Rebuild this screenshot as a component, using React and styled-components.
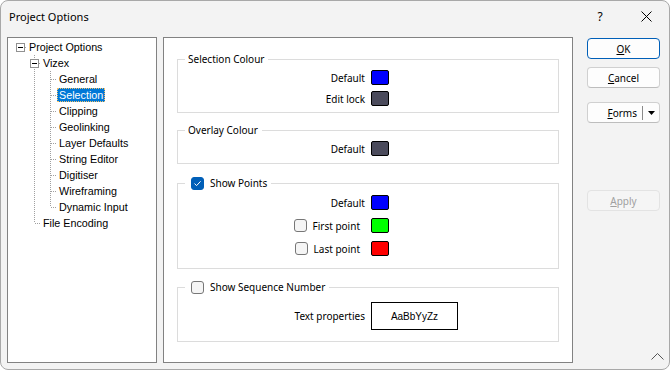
import styled, { createGlobalStyle } from 'styled-components';

const GlobalStyle = createGlobalStyle`
  html, body {
    margin: 0;
    padding: 0;
    background: #ffffff;
  }
  body {
    font-family: "Noto Sans", "Liberation Sans", sans-serif;
  }
`;

const Window = styled.div`
  position: relative;
  width: 670px;
  height: 370px;
  box-sizing: border-box;
  border: 1px solid #a8a8a8;
  border-radius: 8px;
  background: #f3f3f3;
  overflow: hidden;
  display: flex;
  flex-direction: column;
  color: #000;
  font-family: "Noto Sans", "Liberation Sans", sans-serif;
`;

const TitleBar = styled.div`
  height: 30px;
  flex: none;
  display: flex;
  align-items: center;
  padding-left: 8px;
  font-size: 11px;
`;

const Title = styled.div`
  flex: 1;
`;

const CaptionButton = styled.div`
  width: 46px;
  height: 30px;
  display: flex;
  align-items: center;
  justify-content: center;
  font-size: 12px;
`;

const Body = styled.div`
  flex: 1;
  display: flex;
  padding: 6px 9px 6px 6px;
  min-height: 0;
`;

const Tree = styled.div`
  width: 150px;
  flex: none;
  box-sizing: border-box;
  border: 1px solid #828282;
  background: #fff;
  padding-top: 1px;
  font-family: "Liberation Sans", Arial, sans-serif;
  font-size: 10.75px;
`;

const TreeRow = styled.div`
  display: flex;
  height: 16px;
  padding-left: ${p => p.$indent}px;
`;

const dotsV = 'repeating-linear-gradient(to bottom, #a0a0a0 0 1px, transparent 1px 2px)';
const dotsH = 'repeating-linear-gradient(to right, #a0a0a0 0 1px, transparent 1px 2px)';

const Guide = styled.div`
  position: relative;
  flex: none;
  width: ${p => p.$w}px;
  height: 16px;
  &::before {
    content: '';
    display: ${p => (p.$v ? 'block' : 'none')};
    position: absolute;
    left: ${p => p.$at}px;
    top: 0;
    width: 1px;
    height: ${p => (p.$v === 'top' ? '8px' : '16px')};
    background: ${dotsV};
  }
  &::after {
    content: '';
    display: ${p => (p.$h ? 'block' : 'none')};
    position: absolute;
    left: ${p => p.$at + 1}px;
    right: 0;
    top: 8px;
    height: 1px;
    background: ${dotsH};
  }
`;

const Expander = styled.span`
  position: absolute;
  z-index: 1;
  left: ${p => p.$at - 4}px;
  top: 4px;
  width: 9px;
  height: 9px;
  box-sizing: border-box;
  border: 1px solid #919191;
  background: #fff;
  &::after {
    content: '';
    position: absolute;
    left: 1px;
    top: 3px;
    width: 5px;
    height: 1px;
    background: #000;
  }
`;

const NodeLabel = styled.span`
  height: 14px;
  line-height: 14px;
  margin-top: 1px;
  padding: 0 2px;
  white-space: nowrap;
  background: ${p => (p.$selected ? '#0078d7' : 'transparent')};
  color: ${p => (p.$selected ? '#fff' : '#000')};
  outline: ${p => (p.$selected ? '1px dotted #f5c26b' : 'none')};
  outline-offset: -1px;
`;

const Panel = styled.div`
  width: 410px;
  flex: none;
  margin-left: 6px;
  box-sizing: border-box;
  border: 1px solid #828282;
  background: #fff;
  padding: 14px 13px 0;
  display: flex;
  flex-direction: column;
  font-size: 10px;
`;

const Group = styled.fieldset`
  margin: ${p => p.$mt || 0}px 0 0;
  padding: ${p => p.$pt}px 0 ${p => p.$pb}px;
  border: 1px solid #dcdcdc;
  min-width: 0;
  display: flex;
  flex-direction: column;
  gap: ${p => p.$gap || 6}px;
`;

const Legend = styled.legend`
  margin-left: 7px;
  padding: 0 4px 0 ${p => (p.$check ? 6 : 3)}px;
  height: 14px;
  line-height: 14px;
`;

const LegendInner = styled.span`
  display: flex;
  align-items: center;
  gap: 6px;
  height: 14px;
`;

const FieldRow = styled.div`
  display: grid;
  grid-template-columns: 187px ${p => p.$w || 18}px;
  column-gap: 6px;
  align-items: center;
  height: ${p => p.$h || 15}px;
`;

const FieldLabel = styled.span`
  justify-self: end;
  display: flex;
  align-items: center;
  gap: 6px;
  padding-right: ${p => (p.$check ? 5 : 0)}px;
  line-height: 14px;
`;

const Swatch = styled.span`
  display: block;
  width: 18px;
  height: 15px;
  box-sizing: border-box;
  border: 1px solid #000;
  border-radius: 2px;
  background: ${p => p.$color};
`;

const FontPreview = styled.div`
  height: 28px;
  box-sizing: border-box;
  border: 1px solid #000;
  display: flex;
  align-items: center;
  justify-content: center;
  font-family: "Liberation Sans", Arial, sans-serif;
  font-size: 10px;
`;

const Box = styled.span`
  width: 13px;
  height: 13px;
  flex: none;
  box-sizing: border-box;
  border-radius: 3px;
  border: 1px solid ${p => (p.$checked ? '#005fb8' : '#777')};
  background: ${p => (p.$checked ? '#005fb8' : '#f5f5f5')};
  display: flex;
  align-items: center;
  justify-content: center;
`;

const Buttons = styled.div`
  width: 73px;
  flex: none;
  margin-left: 14px;
  display: flex;
  flex-direction: column;
`;

const Button = styled.div`
  height: 21px;
  margin-top: ${p => p.$mt}px;
  box-sizing: border-box;
  border: 1px solid ${p => (p.$default ? '#005fb8' : p.$disabled ? '#e3e3e3' : '#d0d0d0')};
  border-bottom-color: ${p => (p.$default ? '#005fb8' : p.$disabled ? '#e3e3e3' : '#bdbdbd')};
  border-radius: 4px;
  background: ${p => (p.$disabled ? '#f5f5f5' : '#fdfdfd')};
  color: ${p => (p.$disabled ? '#a0a0a0' : '#000')};
  display: flex;
  align-items: center;
  justify-content: center;
  font-size: 10px;
`;

const SplitText = styled.span`
  flex: 1;
  text-align: right;
  padding-right: 5px;
`;

const SplitDivider = styled.span`
  width: 1px;
  height: 14px;
  background: #8a8a8a;
`;

const SplitArrow = styled.span`
  width: 16px;
  display: flex;
  justify-content: center;
`;

const Grip = styled.svg`
  position: absolute;
  right: 5px;
  bottom: 9px;
`;

const Check = () => (
  <svg width="9" height="9" viewBox="0 0 9 9">
    <path d="M1.5 4.6 L3.6 6.6 L7.6 2.3" fill="none" stroke="#fff" strokeWidth="1" />
  </svg>
);

const CheckBox = ({ checked }) => <Box $checked={checked}>{checked && <Check />}</Box>;

const u = ch => <span style={{ textDecoration: 'underline' }}>{ch}</span>;

const children = ['General', 'Selection', 'Clipping', 'Geolinking', 'Layer Defaults', 'String Editor', 'Digitiser', 'Wireframing', 'Dynamic Input'];

export default function App() {
  return (
    <>
      <GlobalStyle />
      <Window>
        <TitleBar>
          <Title>Project Options</Title>
          <CaptionButton>?</CaptionButton>
          <CaptionButton>
            <svg width="11" height="11" viewBox="0 0 11 11">
              <path d="M0.5 0.5 L10.5 10.5 M10.5 0.5 L0.5 10.5" stroke="#000" strokeWidth="1" />
            </svg>
          </CaptionButton>
        </TitleBar>
        <Body>
          <Tree>
            <TreeRow $indent={4}>
              <Guide $w={15} $at={8} $h>
                <Expander $at={8} />
              </Guide>
              <NodeLabel>Project Options</NodeLabel>
            </TreeRow>
            <TreeRow $indent={18}>
              <Guide $w={15} $at={8} $v="full" $h>
                <Expander $at={8} />
              </Guide>
              <NodeLabel>Vizex</NodeLabel>
            </TreeRow>
            {children.map((name, i) => (
              <TreeRow key={name} $indent={18}>
                <Guide $w={15} $at={8} $v="full" />
                <Guide $w={16} $at={9} $v={i === children.length - 1 ? 'top' : 'full'} $h />
                <NodeLabel $selected={name === 'Selection'}>{name}</NodeLabel>
              </TreeRow>
            ))}
            <TreeRow $indent={18}>
              <Guide $w={15} $at={8} $v="top" $h />
              <NodeLabel>File Encoding</NodeLabel>
            </TreeRow>
          </Tree>

          <Panel>
            <Group $pt={4} $pb={6}>
              <Legend>Selection Colour</Legend>
              <FieldRow>
                <FieldLabel>Default</FieldLabel>
                <Swatch $color="#0000ff" />
              </FieldRow>
              <FieldRow>
                <FieldLabel>Edit lock</FieldLabel>
                <Swatch $color="#4b4b5c" />
              </FieldRow>
            </Group>

            <Group $mt={10} $pt={4} $pb={7}>
              <Legend>Overlay Colour</Legend>
              <FieldRow>
                <FieldLabel>Default</FieldLabel>
                <Swatch $color="#4b4b5c" />
              </FieldRow>
            </Group>

            <Group $mt={12} $pt={5} $pb={12} $gap={8}>
              <Legend $check>
                <LegendInner>
                  <CheckBox checked />
                  Show Points
                </LegendInner>
              </Legend>
              <FieldRow>
                <FieldLabel>Default</FieldLabel>
                <Swatch $color="#0000ff" />
              </FieldRow>
              <FieldRow>
                <FieldLabel $check>
                  <CheckBox />
                  First point
                </FieldLabel>
                <Swatch $color="#00ff00" />
              </FieldRow>
              <FieldRow>
                <FieldLabel $check>
                  <CheckBox />
                  Last point
                </FieldLabel>
                <Swatch $color="#ff0000" />
              </FieldRow>
            </Group>

            <Group $mt={11} $pt={8} $pb={11}>
              <Legend $check>
                <LegendInner>
                  <CheckBox />
                  Show Sequence Number
                </LegendInner>
              </Legend>
              <FieldRow $w={87} $h={28}>
                <FieldLabel>Text properties</FieldLabel>
                <FontPreview>AaBbYyZz</FontPreview>
              </FieldRow>
            </Group>
          </Panel>

          <Buttons>
            <Button $mt={1} $default>{u('O')}K</Button>
            <Button $mt={8}>{u('C')}ancel</Button>
            <Button $mt={14}>
              <SplitText>{u('F')}orms</SplitText>
              <SplitDivider />
              <SplitArrow>
                <svg width="7" height="4" viewBox="0 0 7 4">
                  <path d="M0 0 H7 L3.5 4 Z" fill="#000" />
                </svg>
              </SplitArrow>
            </Button>
            <Button $mt={67} $disabled>{u('A')}pply</Button>
          </Buttons>
        </Body>
        <Grip width="13" height="8" viewBox="0 0 13 8">
          <path d="M0.5 7.5 L6.5 1.5 L12.5 7.5" fill="none" stroke="#555" strokeWidth="1" />
        </Grip>
      </Window>
    </>
  );
}
